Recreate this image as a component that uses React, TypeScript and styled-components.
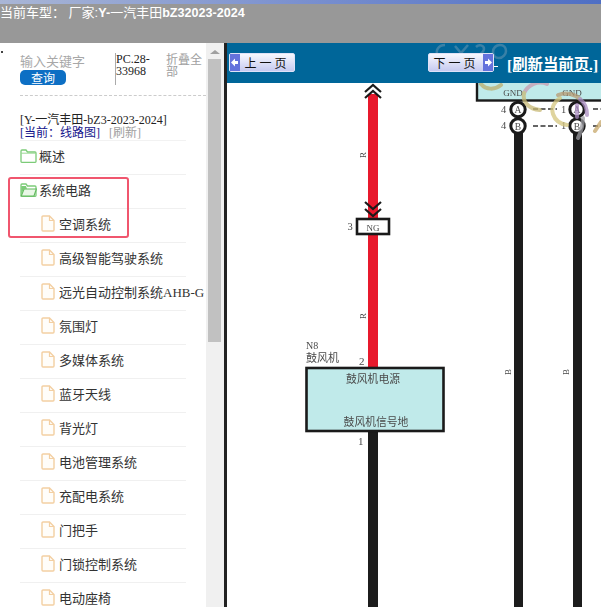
import styled, { createGlobalStyle } from 'styled-components';

const CJK = '"Noto Sans CJK SC", "Liberation Sans", sans-serif';
const SERIF_CJK = '"Liberation Serif", "Noto Sans CJK SC", serif';

const GlobalStyle = createGlobalStyle`
  html, body {
    margin: 0;
    padding: 0;
    background: #fff;
    overflow: hidden;
  }
`;

const childItems = [
  '空调系统',
  '高级智能驾驶系统',
  '远光自动控制系统AHB-G',
  '氛围灯',
  '多媒体系统',
  '蓝牙天线',
  '背光灯',
  '电池管理系统',
  '充配电系统',
  '门把手',
  '门锁控制系统',
  '电动座椅',
];

const FolderIcon = ({ open }: { open: boolean }) => (
  <IconSvg width="17" height="14" viewBox="0 0 17 14">
    <path
      d="M1 12.5V2a1 1 0 0 1 1-1h4l1.5 2H15a1 1 0 0 1 1 1v8.5a.8.8 0 0 1-.8.8H1.8a.8.8 0 0 1-.8-.8z"
      fill="#fff"
      stroke="#7ccb78"
      strokeWidth="1.3"
    />
    {open ? (
      <path d="M1.3 12.8 4 6h12.4l-2.4 7z" fill="#e9f7e6" stroke="#62b95e" strokeWidth="1.2" />
    ) : (
      <path d="M1 4.2h15" stroke="#9bd896" strokeWidth="1" />
    )}
    {open && <path d="M1.2 3v9.4L3.8 6H7L6 3z" fill="#7ccb78" />}
  </IconSvg>
);

const FileIcon = () => (
  <IconSvg width="14" height="17" viewBox="0 0 14 17">
    <path
      d="M1 2a1 1 0 0 1 1-1h6.5L13 5.5V15a1 1 0 0 1-1 1H2a1 1 0 0 1-1-1z"
      fill="#fffdf9"
      stroke="#f3cfa2"
      strokeWidth="1.4"
    />
    <path d="M8.5 1v4.5H13" fill="none" stroke="#f3cfa2" strokeWidth="1.2" />
  </IconSvg>
);

const BlockArrow = ({ right }: { right?: boolean }) => (
  <ArrowBox viewBox="0 0 10 16">
    <path
      d={right ? 'M2 6.5h3V4l4 4-4 4V9.5H2z' : 'M8 6.5H5V4L1 8l4 4V9.5h3z'}
      fill="#fff"
    />
  </ArrowBox>
);

const Chevron = ({ x, y, up }: { x: number; y: number; up: boolean }) => (
  <path
    d={up ? `M${x - 8} ${y + 7}L${x} ${y}L${x + 8} ${y + 7}` : `M${x - 8} ${y - 7}L${x} ${y}L${x + 8} ${y - 7}`}
    fill="none"
    stroke="#1a1a1a"
    strokeWidth="2.2"
  />
);

const Diagram = () => (
  <DiagramSvg viewBox="227 83 374 524">
    <rect x="477" y="78" width="130" height="22.5" fill="#bfeaea" stroke="#1a1a1a" strokeWidth="2.4" />
    <DiagramText x="513" y="96" textAnchor="middle" fontSize="9">GND</DiagramText>
    <DiagramText x="572" y="96" textAnchor="middle" fontSize="9">GND</DiagramText>

    <rect x="368" y="94" width="10" height="124" fill="#e8192c" />
    <rect x="368" y="235" width="10" height="133" fill="#e8192c" />
    <rect x="368" y="431" width="10" height="176" fill="#1c1c1c" />
    <Chevron x={373} y={85} up />
    <Chevron x={373} y={91} up />
    <Chevron x={373} y={209} up={false} />
    <Chevron x={373} y={216} up={false} />

    <rect x="357" y="219" width="32" height="15" fill="#fff" stroke="#1a1a1a" strokeWidth="2.6" />
    <DiagramText x="373" y="230.5" textAnchor="middle" fontSize="9">NG</DiagramText>
    <DiagramText x="347.5" y="230" fontSize="10.5">3</DiagramText>
    <DiagramText x="0" y="0" fontSize="9" transform="translate(366 158) rotate(-90)">R</DiagramText>
    <DiagramText x="0" y="0" fontSize="9" transform="translate(366 319) rotate(-90)">R</DiagramText>

    <DiagramText x="306" y="349" fontSize="10">N8</DiagramText>
    <DiagramText x="306" y="362" fontSize="11">鼓风机</DiagramText>
    <DiagramText x="359" y="365" fontSize="11">2</DiagramText>
    <rect x="306.5" y="368" width="137" height="63" fill="#c0eaea" stroke="#1a1a1a" strokeWidth="2.6" />
    <DiagramText x="373" y="383" textAnchor="middle" fontSize="10.8">鼓风机电源</DiagramText>
    <DiagramText x="376" y="426" textAnchor="middle" fontSize="10.8">鼓风机信号地</DiagramText>
    <DiagramText x="358" y="445" fontSize="11">1</DiagramText>

    {[518, 577].map((cx) => (
      <g key={cx}>
        <rect x={cx - 4} y="130" width="9" height="477" fill="#1c1c1c" />
        <circle cx={cx} cy="109.5" r="7.2" fill="#fff" stroke="#1a1a1a" strokeWidth="3" />
        <circle cx={cx} cy="126" r="7.2" fill="#fff" stroke="#1a1a1a" strokeWidth="3" />
        <DiagramText x={cx} y="113" textAnchor="middle" fontSize="9.5">A</DiagramText>
        <DiagramText x={cx} y="129.5" textAnchor="middle" fontSize="9.5">B</DiagramText>
      </g>
    ))}
    <DiagramText x="501" y="112.5" fontSize="10.5">4</DiagramText>
    <DiagramText x="501" y="129" fontSize="10.5">4</DiagramText>
    <DiagramText x="561" y="112.5" fontSize="10.5">1</DiagramText>
    <DiagramText x="561" y="129" fontSize="10.5">1</DiagramText>
    <path
      d="M533 109h24M533 126h24M593 109h8M593 126h8"
      fill="none"
      stroke="#333"
      strokeWidth="1.4"
      strokeDasharray="5 2.5"
    />
    <DiagramText x="0" y="0" fontSize="9" transform="translate(511 375) rotate(-90)">B</DiagramText>
    <DiagramText x="0" y="0" fontSize="9" transform="translate(569 375) rotate(-90)">B</DiagramText>

    <g fill="none" strokeWidth="4" strokeLinecap="round" opacity="0.75">
      <path d="M481 84c5 6 14 6 20 1" stroke="#b9ad6e" />
      <path d="M547 84c-9-4-19 1-23 9" stroke="#c79ab0" />
      <path d="M524 93c-2 9 5 16 16 17" stroke="#c8b975" />
      <path d="M560 98c-6 4-9 10-7 16 2 6 7 10 14 11" stroke="#d5c67e" />
      <path d="M558 95c8-3 17-1 22 4" stroke="#b79a72" />
      <path d="M580 99c5 4 7 10 7 16" stroke="#a98cc0" />
      <path d="M577 105v12" stroke="#a98cc0" />
      <path d="M583 118c0 7-2 14-5 20" stroke="#9a9aa0" />
      <path d="M595 131c2-3 4-6 6-9" stroke="#c7a86a" />
    </g>
  </DiagramSvg>
);

export default function App() {
  return (
    <>
      <GlobalStyle />
      <Page>
        <TopBar>
          <TopStripe />
          <CarTitle>
            当前车型： 厂家:<strong>Y-</strong>一汽丰田<strong>bZ32023-2024</strong>
          </CarTitle>
        </TopBar>
        <Main>
          <Sidebar>
            <SideContent>
              <SearchRow>
                <SearchColumn>
                  <SearchHint>输入关键字</SearchHint>
                  <SearchButton>查询</SearchButton>
                </SearchColumn>
                <PartCode>PC.28-33968</PartCode>
                <CollapseAll>折叠全部</CollapseAll>
              </SearchRow>
              <ModelInfo>
                <ModelName>[Y-一汽丰田-bZ3-2023-2024]</ModelName>
                <CurrentLine>
                  <CurrentLink>[当前：线路图]</CurrentLink>
                  <RefreshLink>[刷新]</RefreshLink>
                </CurrentLine>
              </ModelInfo>
              <Tree>
                <TreeRow>
                  <FolderIcon open={false} />
                  <span>概述</span>
                </TreeRow>
                <TreeRow>
                  <FolderIcon open />
                  <span>系统电路</span>
                </TreeRow>
                {childItems.map((label) => (
                  <TreeRow key={label} $child>
                    <FileIcon />
                    <span>{label}</span>
                  </TreeRow>
                ))}
                <Highlight />
              </Tree>
            </SideContent>
            <ScrollBar>
              <ScrollArrow />
              <ScrollThumb />
            </ScrollBar>
          </Sidebar>
          <Viewer>
            <PagerBar>
              <BarMark viewBox="0 0 90 18">
                <path d="M14 2C7 2 4 8 7 13c2 3 6 4 10 2M24 3l6 7 7-8M30 10v6M45 4c3-3 8-2 8 2 0 3-5 6-8 10h10M62 9c0-4 3-7 7-7s6 3 6 6-3 7-7 7-6-3-6-6z" />
              </BarMark>
              <PagerButton>
                <BlockArrow />
                <PagerLabel>上一页</PagerLabel>
              </PagerButton>
              <NextLink>
                <PagerButton>
                  <PagerLabel>下一页</PagerLabel>
                  <BlockArrow right />
                </PagerButton>
                &nbsp;&nbsp;
              </NextLink>
              <RefreshPage>[刷新当前页.]</RefreshPage>
            </PagerBar>
            <Diagram />
          </Viewer>
        </Main>
      </Page>
    </>
  );
}

const Page = styled.div`
  display: flex;
  flex-direction: column;
  width: 601px;
  height: 607px;
  overflow: hidden;
`;

const TopBar = styled.header`
  flex: 0 0 43px;
  background: #989898;
`;

const TopStripe = styled.div`
  height: 4px;
  background: linear-gradient(90deg, #a9b6d6 0%, #7a90cf 50%, #4f6fc4 100%);
`;

const CarTitle = styled.div`
  color: #fff;
  font-family: "Liberation Sans", ${CJK};
  font-size: 13px;
  line-height: 17px;
  white-space: pre;

  strong {
    font-size: 12.6px;
    font-weight: bold;
  }
`;

const Main = styled.div`
  display: flex;
  flex: 1;
  min-height: 0;
`;

const Sidebar = styled.aside`
  display: flex;
  flex: 0 0 227px;
  box-sizing: border-box;
  border-right: 3px solid #222;
`;

const SideContent = styled.div`
  position: relative;
  flex: 0 0 206px;
  overflow: hidden;

  &::before {
    content: "";
    position: absolute;
    top: 8px;
    left: 1px;
    width: 2px;
    height: 2px;
    background: #444;
  }
`;

const SearchRow = styled.div`
  display: flex;
  box-sizing: border-box;
  height: 53px;
  margin-left: 20px;
  padding-top: 10px;
  border-bottom: 1px dashed #ccc;
`;

const SearchColumn = styled.div`
  flex: 0 0 95px;
`;

const SearchHint = styled.div`
  height: 17px;
  color: #a8a8a8;
  font-family: ${CJK};
  font-size: 13px;
  line-height: 15px;
`;

const SearchButton = styled.button`
  display: block;
  width: 46px;
  height: 15px;
  padding: 0;
  border: 0;
  border-radius: 5px;
  background: #0d6fc4;
  color: #fff;
  font-family: ${CJK};
  font-size: 12px;
  line-height: 14px;
`;

const PartCode = styled.div`
  flex: 0 0 51px;
  box-sizing: border-box;
  height: 32px;
  border-left: 1px solid #aaa;
  color: #222;
  font-family: "Liberation Serif", serif;
  font-size: 12px;
  line-height: 12px;
`;

const CollapseAll = styled.div`
  flex: 0 0 38px;
  color: #a0a0a0;
  font-family: ${CJK};
  font-size: 12px;
  line-height: 12px;
`;

const ModelInfo = styled.div`
  margin-left: 20px;
  height: 44px;
  padding-top: 18px;
  box-sizing: border-box;
  font-family: ${SERIF_CJK};
  font-size: 12px;
  line-height: 12.5px;
`;

const ModelName = styled.div`
  color: #222;
  white-space: nowrap;
`;

const CurrentLine = styled.div`
  white-space: nowrap;
`;

const CurrentLink = styled.span`
  color: #14148c;
`;

const RefreshLink = styled.span`
  margin-left: 9px;
  color: #a0a0a0;
`;

const Tree = styled.div`
  position: relative;
  margin-left: 20px;
  width: 166px;
  border-top: 1px solid #f2f2f2;
`;

const TreeRow = styled.div<{ $child?: boolean }>`
  display: flex;
  align-items: center;
  gap: ${(p) => (p.$child ? '4px' : '2px')};
  box-sizing: border-box;
  height: 34px;
  padding-bottom: 4px;
  padding-left: ${(p) => (p.$child ? '21px' : '0')};
  border-bottom: 1px solid #f0f0f0;
  color: #333;
  font-family: ${SERIF_CJK};
  font-size: 13px;
  white-space: nowrap;
`;

const IconSvg = styled.svg`
  flex-shrink: 0;
`;

const Highlight = styled.div`
  position: absolute;
  top: 36px;
  left: -12px;
  width: 117px;
  height: 57px;
  border: 2px solid #f0566e;
  border-radius: 3px;
`;

const ScrollBar = styled.div`
  flex: 0 0 18px;
  background: #f0f0f0;
`;

const ScrollArrow = styled.div`
  width: 0;
  height: 0;
  margin: 7px 0 5px 4px;
  border-left: 5px solid transparent;
  border-right: 5px solid transparent;
  border-bottom: 4px solid #a0a0a0;
`;

const ScrollThumb = styled.div`
  width: 13px;
  height: 283px;
  margin-left: 2px;
  background: #c1c1c1;
`;

const Viewer = styled.section`
  display: flex;
  flex-direction: column;
  flex: 1;
  min-width: 0;
`;

const PagerBar = styled.nav`
  position: relative;
  display: flex;
  flex: 0 0 40px;
  align-items: center;
  padding-left: 2px;
  background: #006699;
  overflow: hidden;
  white-space: nowrap;
`;

const BarMark = styled.svg`
  position: absolute;
  top: 0;
  left: 204px;
  width: 90px;
  height: 18px;
  fill: none;
  stroke: #8fa9bb;
  stroke-width: 2.5;
  opacity: 0.4;
`;

const PagerButton = styled.span`
  position: relative;
  display: inline-flex;
  align-items: center;
  vertical-align: middle;
  box-sizing: border-box;
  width: 66px;
  height: 19px;
  margin-top: -1px;
  border: 1px solid #dfe2f7;
  border-radius: 2px;
  background: linear-gradient(180deg, #f7f8fe 0%, #c6caf0 100%);
  color: #111;
`;

const ArrowBox = styled.svg`
  flex: 0 0 10px;
  height: 100%;
  background: #6472dc;
`;

const PagerLabel = styled.span`
  flex: 1;
  font-family: ${CJK};
  font-size: 12px;
  line-height: 16px;
  letter-spacing: 3px;
  text-align: center;
`;

const NextLink = styled.span`
  margin-left: 133px;
  color: #fff;
  font-size: 8px;
  text-decoration: underline;
`;

const RefreshPage = styled.span`
  margin-left: 9px;
  color: #fff;
  font-family: ${SERIF_CJK};
  font-size: 15.4px;
  font-weight: bold;
  text-decoration: underline;
`;

const DiagramSvg = styled.svg`
  display: block;
  flex: 1;
  min-height: 0;
  width: 100%;
  background: #fff;
  filter: blur(0.3px);
`;

const DiagramText = styled.text`
  fill: #4a4a4a;
  font-family: ${SERIF_CJK};
`;
